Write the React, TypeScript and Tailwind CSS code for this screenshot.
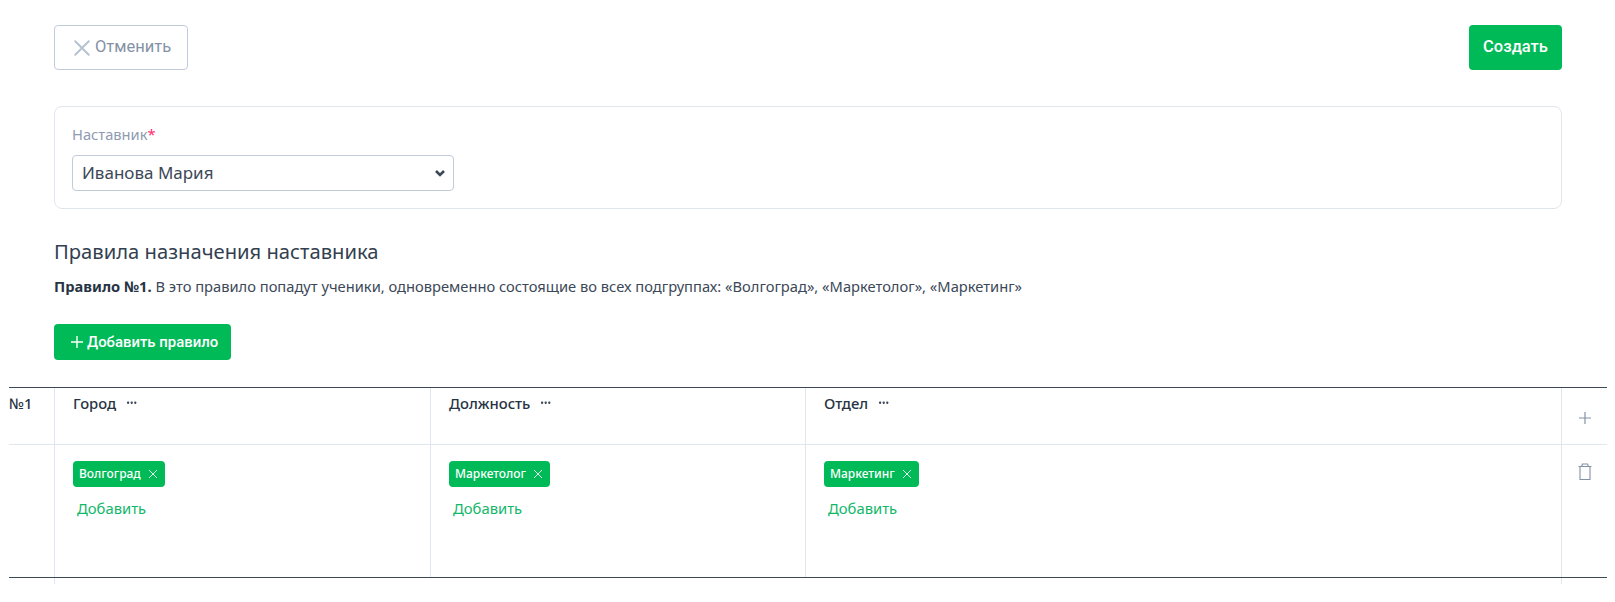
import React from "react";

function XIcon({ className, width = 1 }: { className: string; width?: number }) {
  return (
    <svg viewBox="0 0 16 16" className={className} fill="none" stroke="currentColor" strokeWidth={width} strokeLinecap="round">
      <path d="M2 2 L14 14 M14 2 L2 14" />
    </svg>
  );
}

function Dots() {
  return (
    <svg viewBox="0 0 10 4" className="w-[10px] h-[4px] ml-[11px]" fill="#3c4858">
      <rect x="0" y="0.5" width="2.2" height="2.4" rx="0.8" />
      <rect x="3.6" y="0.5" width="2.2" height="2.4" rx="0.8" />
      <rect x="7.2" y="0.5" width="2.2" height="2.4" rx="0.8" />
    </svg>
  );
}

function Head({ title }: { title: string }) {
  return (
    <div className="border-l border-[#e0e6ed] pl-[18px] pt-[3px] h-[57px]">
      <div className="flex items-center h-[24px]">
        <span className="text-[14.8px] font-medium text-[#273444]">{title}</span>
        <Dots />
      </div>
    </div>
  );
}

function Cell({ tag }: { tag: string }) {
  return (
    <div className="border-l border-[#e0e6ed] pt-[15px] pl-[18px]">
      <div className="inline-flex items-center h-[26px] rounded-[4px] bg-[#00ba58] pl-[6px] pr-[7px] text-white text-[12px] font-medium">
        {tag}
        <XIcon className="w-[10px] h-[10px] ml-[7px]" width={1.4} />
      </div>
      <div className="mt-[9px] ml-[4px] text-[14.8px] leading-[24px] text-[#12b76a]">Добавить</div>
    </div>
  );
}

const cols = "grid grid-cols-[45px_376px_375px_756px_46px]";

export default function App() {
  return (
    <div className="w-[1615px] h-[602px] overflow-hidden bg-white text-[#273444] font-['Noto_Sans',sans-serif]">
      <div className="pl-[54px] pr-[53px] pt-[25px]">
        <div className="flex justify-between">
          <button className="h-[45px] w-[134px] border border-[#c0ccda] rounded-[4px] flex items-center pl-[18px] text-[#8492a6] text-[16.5px] font-['Roboto',sans-serif]">
            <XIcon className="w-[18px] h-[18px] mr-[4px] text-[#b6c2d2]" width={1.8} />
            Отменить
          </button>
          <button className="h-[45px] w-[93px] rounded-[4px] bg-[#00ba58] text-white text-[16.5px] font-medium font-['Roboto',sans-serif]">
            Создать
          </button>
        </div>

        <div className="mt-[36px] h-[103px] border border-[#e0e6ed] rounded-[8px] pl-[17px] pt-[17px]">
          <div className="text-[14.7px] leading-[20px] text-[#8f9bb0]">
            Наставник<span className="text-[#ff2d6f]">*</span>
          </div>
          <div className="mt-[11px] w-[382px] h-[36px] border border-[#c0ccda] rounded-[4px] flex items-center justify-between pl-[9px] pr-[8px]">
            <span className="text-[17px] text-[#3c4858]">Иванова Мария</span>
            <svg viewBox="0 0 10 7" className="w-[10px] h-[7px]" fill="none" stroke="#3c4858" strokeWidth="2.6">
              <path d="M1 1 L5 5 L9 1" />
            </svg>
          </div>
        </div>

        <h2 className="mt-[29px] text-[20.2px] leading-[26px] font-normal text-[#333f50]">Правила назначения наставника</h2>
        <p className="mt-[12px] text-[14.7px] leading-[20px] text-[#3c4858]">
          <span className="font-bold text-[#273444]">Правило №1.</span> В это правило попадут ученики, одновременно состоящие во всех подгруппах: «Волгоград», «Маркетолог», «Маркетинг»
        </p>
        <button className="mt-[28px] h-[36px] w-[177px] rounded-[4px] bg-[#00ba58] text-white text-[14.9px] font-medium flex items-center pl-[17px] font-['Roboto',sans-serif]">
          <svg viewBox="0 0 12 12" className="w-[12px] h-[12px] mr-[4px]" fill="none" stroke="currentColor" strokeWidth="1.4">
            <path d="M6 0 V12 M0 6 H12" />
          </svg>
          Добавить правило
        </button>
      </div>

      <div className="mt-[27px] ml-[9px] w-[1598px]">
        <div className="border-y border-[#3c4858]">
          <div className={cols + " h-[57px] border-b border-[#e0e6ed]"}>
            <div className="pt-[3px] text-[14.8px] leading-[24px] font-medium">№1</div>
            <Head title="Город" />
            <Head title="Должность" />
            <Head title="Отдел" />
            <div className="border-l border-[#e0e6ed] flex items-center justify-center pt-[3px]">
              <svg viewBox="0 0 12 12" className="w-[12px] h-[12px]" fill="none" stroke="#8492a6" strokeWidth="1.2">
                <path d="M6 0 V12 M0 6 H12" />
              </svg>
            </div>
          </div>
          <div className={cols + " h-[132px]"}>
            <div />
            <Cell tag="Волгоград" />
            <Cell tag="Маркетолог" />
            <Cell tag="Маркетинг" />
            <div className="border-l border-[#e0e6ed] flex justify-center pt-[18px]">
              <svg viewBox="0 0 14 17" className="w-[14px] h-[17px]" fill="none" stroke="#8492a6" strokeWidth="1.1">
                <path d="M0.5 3.5 H13.5 M2 3.5 V16.5 H12 V3.5 M3.5 3.5 L4.5 1 H9.5 L10.5 3.5" />
              </svg>
            </div>
          </div>
        </div>
        <div className={cols + " h-[6px]"}>
          <div />
          <div className="border-l border-[#e0e6ed]" />
          <div />
          <div />
          <div className="border-l border-[#e0e6ed]" />
        </div>
      </div>
    </div>
  );
}
